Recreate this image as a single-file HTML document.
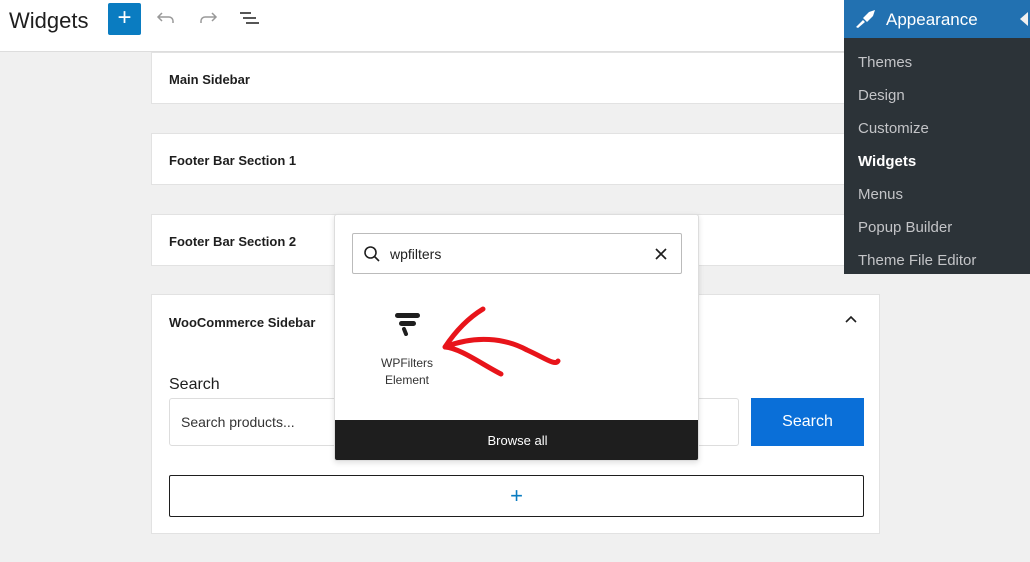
<!DOCTYPE html>
<html><head><style>
*{margin:0;padding:0;box-sizing:border-box}
body{width:1030px;height:562px;background:#f0f0f0;font-family:"Liberation Sans",sans-serif;position:relative;overflow:hidden;color:#1e1e1e}
.abs{position:absolute}
.card{position:absolute;left:151px;width:729px;background:#fff;border:1px solid #e2e2e2}
.card .t{position:absolute;left:17px;font-size:13px;font-weight:bold;color:#1e1e1e}
.menu div{position:absolute;left:14px;font-size:15px;color:#c3c4c7}
</style></head><body>
<div class="abs" style="left:0;top:0;width:1030px;height:52px;background:#fff;border-bottom:1px solid #ddd"></div>
<div class="abs" style="left:9px;top:8px;font-size:22px;color:#1e1e1e">Widgets</div>
<div class="abs" style="left:108px;top:3px;width:33px;height:32px;background:#0a7cc1;border-radius:2px;color:#fff;font-size:24px;line-height:30px;text-align:center">+</div>
<svg class="abs" style="left:156px;top:10px" width="20" height="16" viewBox="0 0 20 16"><path d="M6 3 L2 7 L6 11 M2 7 H13 A4 4 0 0 1 17 11 V13" stroke="#999" stroke-width="1.5" fill="none"/></svg>
<svg class="abs" style="left:198px;top:10px" width="20" height="16" viewBox="0 0 20 16"><path d="M14 3 L18 7 L14 11 M18 7 H7 A4 4 0 0 0 3 11 V13" stroke="#999" stroke-width="1.5" fill="none"/></svg>
<svg class="abs" style="left:239px;top:11px" width="22" height="16" viewBox="0 0 22 16"><path d="M1 2H12M4 7H17M7 12H20" stroke="#1e1e1e" stroke-width="1.6"/></svg>

<div class="card" style="top:52px;height:52px"><div class="t" style="top:19px">Main Sidebar</div></div>
<div class="card" style="top:133px;height:52px"><div class="t" style="top:19px">Footer Bar Section 1</div></div>
<div class="card" style="top:214px;height:52px"><div class="t" style="top:19px">Footer Bar Section 2</div></div>
<div class="card" style="top:294px;height:240px"><div class="t" style="top:20px">WooCommerce Sidebar</div>
<svg class="abs" style="left:692px;top:20px" width="14" height="10" viewBox="0 0 14 10"><path d="M2 7L7 2L12 7" stroke="#1e1e1e" stroke-width="1.6" fill="none"/></svg>
<div class="abs" style="left:17px;top:81px;font-size:16px;color:#1e1e1e">Search</div>
<div class="abs" style="left:17px;top:103px;width:570px;height:48px;border:1px solid #ddd;border-radius:3px"><div style="position:absolute;left:11px;top:15px;font-size:14px;color:#333">Search products...</div></div>
<div class="abs" style="left:599px;top:103px;width:113px;height:48px;background:#0a6fd8;color:#fff;font-size:16px;text-align:center;line-height:48px">Search</div>
<div class="abs" style="left:17px;top:180px;width:695px;height:42px;border:1px solid #1e1e1e;border-radius:2px;text-align:center;line-height:40px;color:#0a7cc1;font-size:22px">+</div>
</div>

<div class="abs" style="left:334px;top:214px;width:365px;height:247px;background:#fff;border:1px solid #ddd;border-radius:3px;box-shadow:0 2px 6px rgba(0,0,0,.12);overflow:hidden">
<div class="abs" style="left:17px;top:18px;width:330px;height:41px;border:1px solid #bbb;border-radius:2px">
<svg class="abs" style="left:10px;top:11px" width="18" height="18" viewBox="0 0 18 18"><circle cx="7.5" cy="7.5" r="5.5" stroke="#1e1e1e" stroke-width="1.6" fill="none"/><path d="M11.5 11.5L16 16" stroke="#1e1e1e" stroke-width="1.6"/></svg>
<div class="abs" style="left:37px;top:12px;font-size:14px">wpfilters</div>
<svg class="abs" style="left:302px;top:14px" width="12" height="12" viewBox="0 0 12 12"><path d="M1 1L11 11M11 1L1 11" stroke="#1e1e1e" stroke-width="1.7"/></svg>
</div>
<svg class="abs" style="left:59px;top:97px" width="28" height="24" viewBox="0 0 28 24"><rect x="1" y="1" width="25" height="5" rx="2.5" fill="#1e1e1e"/><rect x="5" y="9" width="17" height="5" rx="2.5" fill="#1e1e1e"/><path d="M10 17L12 22" stroke="#1e1e1e" stroke-width="4" stroke-linecap="round"/></svg>
<div class="abs" style="left:20px;top:140px;width:104px;text-align:center;font-size:12px;line-height:17px;color:#333">WPFilters<br>Element</div>
<svg class="abs" style="left:100px;top:85px" width="135" height="85" viewBox="0 0 135 85"><path d="M48 9 C30 20 18 35 10 47 C40 35 70 38 92 50 C110 58 120 66 123 61 M10 47 C25 48 48 65 66 74" stroke="#e8141a" stroke-width="5" fill="none" stroke-linecap="round" stroke-linejoin="round"/></svg>
<div class="abs" style="left:0;top:205px;width:365px;height:42px;background:#1e1e1e;color:#fff;font-size:13px;text-align:center;line-height:42px">Browse all</div>
</div>

<div class="abs menu" style="left:844px;top:0;width:186px;height:274px;background:#2c3338">
<div style="left:0;top:0;width:186px;height:38px;background:#2271b1"></div>
<svg style="position:absolute;left:10px;top:7px" width="24" height="22" viewBox="0 0 24 22"><path d="M2 20L9 13L11 15L4 21Z M9 11L15 5L21 3L19 9L13 15Z" fill="#fff"/></svg>
<div style="left:42px;top:10px;color:#fff;font-size:17px">Appearance</div>
<div style="left:176px;top:12px;width:0;height:0;border-top:7px solid transparent;border-bottom:7px solid transparent;border-right:8px solid #f0f0f0"></div>
<div style="top:54px">Themes</div>
<div style="top:87px">Design</div>
<div style="top:120px">Customize</div>
<div style="top:153px;color:#fff;font-weight:bold">Widgets</div>
<div style="top:186px">Menus</div>
<div style="top:219px">Popup Builder</div>
<div style="top:252px">Theme File Editor</div>
</div>
</body></html>
